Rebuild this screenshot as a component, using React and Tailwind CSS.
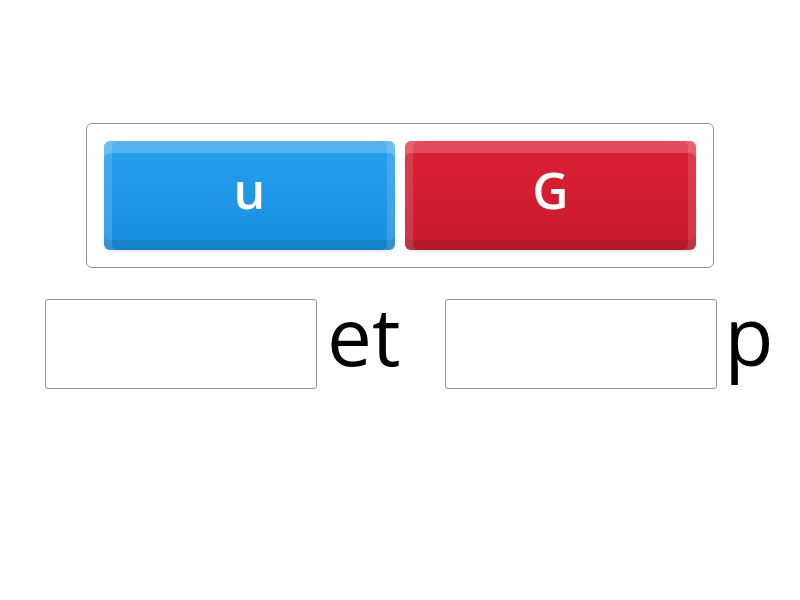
export default function App() {
  const tile =
    "flex h-[109px] w-[291px] items-center justify-center rounded-[6px] pb-[10px] text-[50px] font-semibold text-white";
  return (
    <div className="min-h-[600px] w-[800px] bg-white pt-[123px] font-['Open_Sans',sans-serif]">
      {/* answer tiles */}
      <div className="mx-auto flex w-[628px] gap-[10px] rounded-[6px] border border-[#939393] p-[17px]">
        <div
          className={`${tile} bg-gradient-to-b from-[#27a0ec] to-[#1590de] shadow-[inset_0_12px_0_rgba(255,255,255,0.22),inset_8px_0_0_rgba(255,255,255,0.14),inset_-8px_0_0_rgba(255,255,255,0.14),inset_0_-10px_0_rgba(0,0,0,0.1),0_2px_3px_rgba(0,0,0,0.08)]`}
        >
          u
        </div>
        <div
          className={`${tile} bg-gradient-to-b from-[#de1f33] to-[#c81c2e] shadow-[inset_0_12px_0_rgba(255,255,255,0.2),inset_8px_0_0_rgba(255,255,255,0.12),inset_-8px_0_0_rgba(255,255,255,0.12),inset_0_-10px_0_rgba(0,0,0,0.1),0_2px_3px_rgba(0,0,0,0.08)]`}
        >
          G
        </div>
      </div>

      {/* blanks with word endings */}
      <div className="mt-[31px] flex items-start pl-[45px]">
        <div className="h-[90px] w-[272px] rounded-[3px] border border-[#939393]" />
        <span className="-mt-[9px] ml-[10px] text-[80px] leading-[90px] text-black">et</span>
        <div className="ml-[45px] h-[90px] w-[272px] rounded-[3px] border border-[#939393]" />
        <span className="-mt-[9px] ml-[7px] text-[80px] leading-[90px] text-black">p</span>
      </div>
    </div>
  );
}
